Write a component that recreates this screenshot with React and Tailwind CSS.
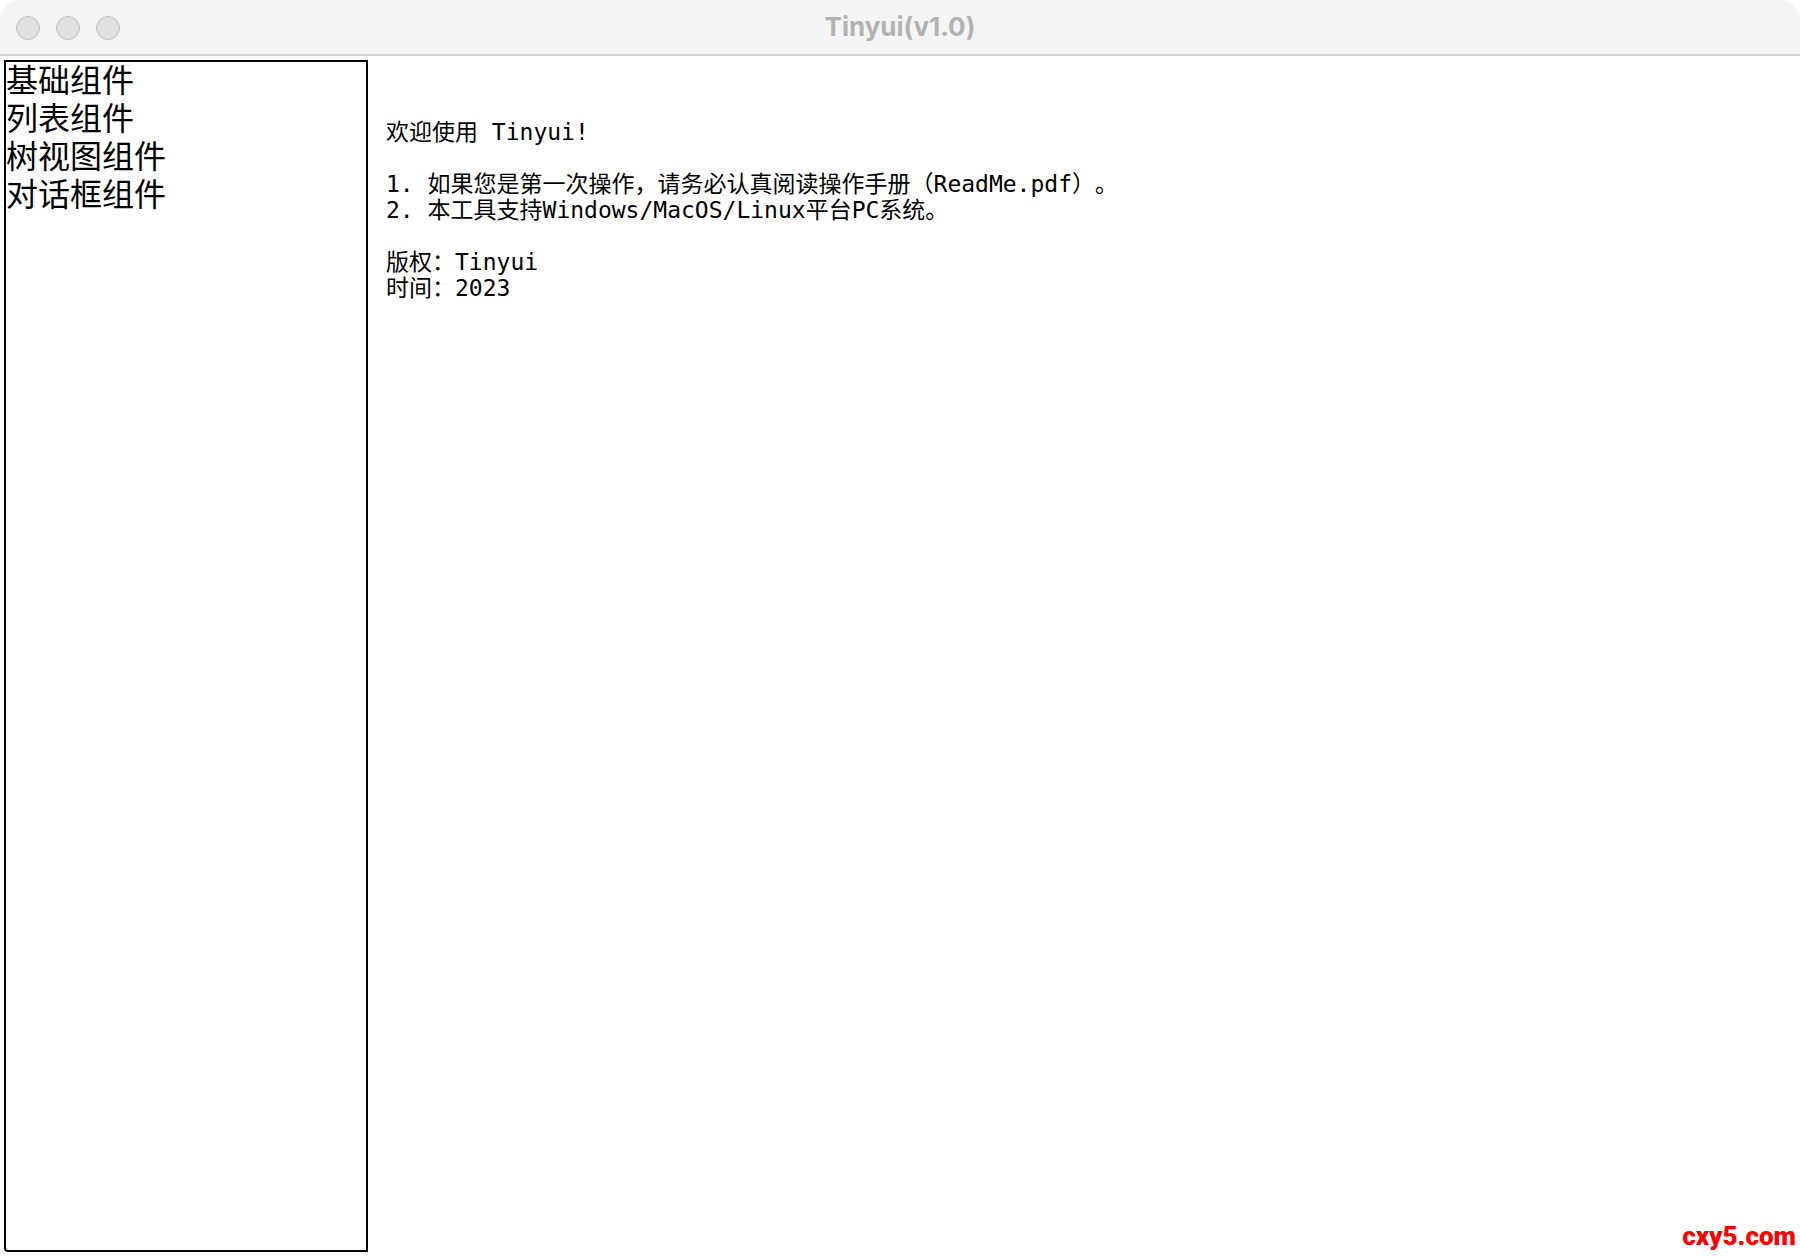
import React, { useState } from 'react';

const menuItems = ['基础组件', '列表组件', '树视图组件', '对话框组件'];

const welcomeText = `欢迎使用 Tinyui!

1. 如果您是第一次操作，请务必认真阅读操作手册（ReadMe.pdf）。
2. 本工具支持Windows/MacOS/Linux平台PC系统。

版权：Tinyui
时间：2023`;

function TitleBar() {
  return (
    <header className="relative flex h-14 items-center justify-center rounded-t-[20px] border-b-2 border-[#d5d5d5] bg-[#f5f5f5]">
      <div className="absolute top-4 left-4 flex gap-4">
        <button aria-label="Close" className="size-6 rounded-full border border-[#c2c2c2] bg-[#dfdfdf]" />
        <button aria-label="Minimize" className="size-6 rounded-full border border-[#c2c2c2] bg-[#dfdfdf]" />
        <button aria-label="Zoom" className="size-6 rounded-full border border-[#c2c2c2] bg-[#dfdfdf]" />
      </div>
      <h1 className="font-['Inter',sans-serif] text-[26px] leading-8 font-bold text-[#b2b2b2]">Tinyui(v1.0)</h1>
    </header>
  );
}

export default function App() {
  const [selected, setSelected] = useState(null);

  return (
    <div className="flex min-h-screen flex-col bg-white text-black">
      <TitleBar />

      <div className="flex flex-1 p-1">
        <nav className="w-[364px] shrink-0 rounded-bl-sm border-2 border-black">
          <ul>
            {menuItems.map((item) => (
              <li key={item}>
                <button
                  onClick={() => setSelected(item)}
                  aria-pressed={selected === item}
                  className="block w-full text-left font-['Liberation_Sans','Noto_Sans_CJK_SC',sans-serif] text-[32px] leading-[38px]"
                >
                  {item}
                </button>
              </li>
            ))}
          </ul>
        </nav>

        <main className="flex min-w-0 flex-1 flex-col justify-between">
          <pre className="px-[18px] pt-[59px] font-['DejaVu_Sans_Mono','Noto_Sans_CJK_SC',monospace] text-[23px] leading-[26px] whitespace-pre-wrap [text-spacing-trim:space-all]">
            {welcomeText}
          </pre>
          <a href="#" className="self-end font-['Roboto',sans-serif] text-[26px] leading-8 font-black text-[#ff0000]">
            cxy5.com
          </a>
        </main>
      </div>
    </div>
  );
}
